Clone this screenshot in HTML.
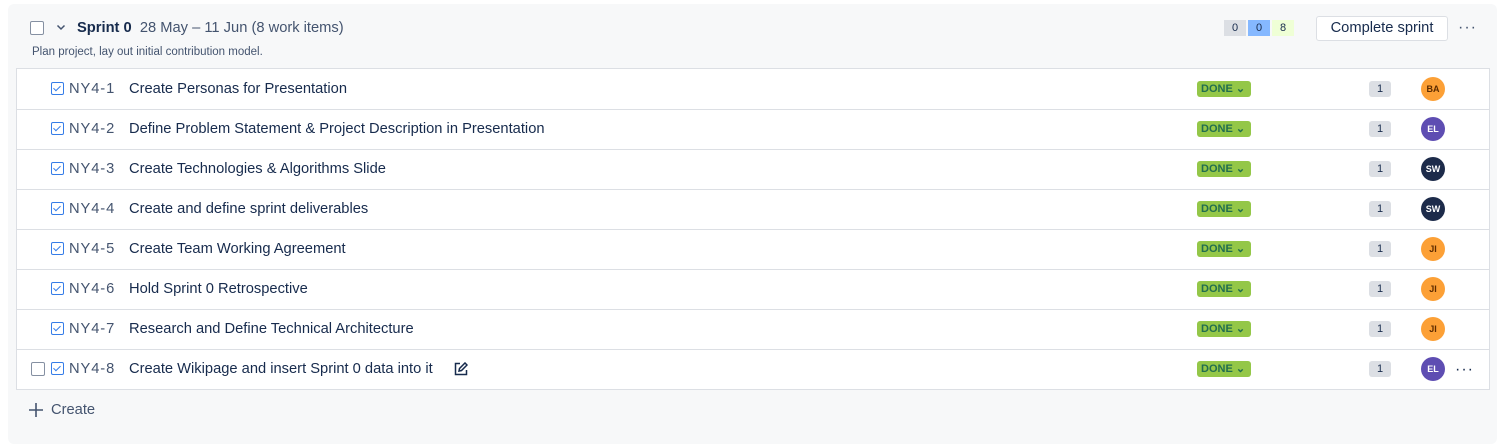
<!DOCTYPE html><html><head><style>
body{margin:0;background:#fff;font-family:"Liberation Sans",sans-serif;color:#172b4d;width:1506px;height:431px;overflow:hidden}
.wrap{position:absolute;left:8px;top:4px;width:1489px;height:440px;background:#f7f8f9;border-radius:6px}
.cb{position:absolute;width:12px;height:12px;border:1px solid #8590a2;border-radius:2px;background:#fff}
.list{position:absolute;left:16px;top:68px;width:1472px;height:320px;background:#fff;border:1px solid #dcdfe4}
.row{position:absolute;left:0;width:1472px;height:40px;border-bottom:1px solid #dcdfe4}
.row:last-child{border-bottom:none}
.ic{position:absolute;left:34px;top:13px;width:11px;height:11px;border:1.5px solid #357de8;border-radius:2px}
.ic:after{content:"";position:absolute;left:3px;top:1px;width:3px;height:6px;border:solid #357de8;border-width:0 1.5px 1.5px 0;transform:rotate(45deg)}
.key{position:absolute;left:52px;top:12px;font-size:14.7px;letter-spacing:.9px;color:#44546f}
.t{position:absolute;left:112px;top:12px;font-size:14.7px;color:#172b4d}
.done{position:absolute;left:1180px;top:12px;height:16px;width:54px;background:#94c748;border-radius:3px;font-size:11px;font-weight:bold;color:#216e4e;line-height:16px;padding-left:4px;box-sizing:border-box}
.pt{position:absolute;left:1352px;top:12px;width:22px;height:16px;background:#dcdfe4;border-radius:3px;font-size:11px;text-align:center;line-height:16px}
.av{position:absolute;left:1404px;top:8px;width:24px;height:24px;border-radius:50%;font-size:9px;font-weight:bold;text-align:center;line-height:24px}
.dots{position:absolute;font-size:16px;letter-spacing:1px;line-height:10px;height:10px}
</style></head><body>
<div class="wrap"></div>
<div class="cb" style="left:30px;top:21px"></div>
<svg style="position:absolute;left:56px;top:24px" width="10" height="7" viewBox="0 0 10 7" fill="none" stroke="#44546f" stroke-width="1.5"><path d="M1.5 1.5L5 5l3.5-3.5"/></svg>
<div style="position:absolute;left:77px;top:20px;font-size:14.7px"><b>Sprint 0</b>&nbsp; <span style="color:#44546f">28 May – 11 Jun (8 work items)</span></div>
<div style="position:absolute;left:32px;top:46px;font-size:11.5px;color:#44546f">Plan project, lay out initial contribution model.</div>
<div style="position:absolute;left:1224px;top:20px;font-size:11px;line-height:16px">
<span style="display:inline-block;width:22px;text-align:center;background:#dcdfe4">0</span><span style="display:inline-block;width:22px;text-align:center;background:#85b8ff;margin-left:2px">0</span><span style="display:inline-block;width:22px;text-align:center;background:#efffd6;margin-left:2px">8</span></div>
<div style="position:absolute;left:1316px;top:16px;width:130px;height:23px;border:1px solid #dcdfe4;border-radius:3px;background:#fff;font-size:14.7px;text-align:center;line-height:23px">Complete sprint</div>
<div class="dots" style="left:1458px;top:23px;color:#44546f">···</div>
<div class="list">
<div class="row" style="top:0"><div class="ic"></div><div class="key">NY4-1</div><div class="t">Create Personas for Presentation</div><div class="done">DONE ⌄</div><div class="pt">1</div><div class="av" style="background:#fca036;color:#5c2b00">BA</div></div>
<div class="row" style="top:40px"><div class="ic"></div><div class="key">NY4-2</div><div class="t">Define Problem Statement &amp; Project Description in Presentation</div><div class="done">DONE ⌄</div><div class="pt">1</div><div class="av" style="background:#5e4db2;color:#fff">EL</div></div>
<div class="row" style="top:80px"><div class="ic"></div><div class="key">NY4-3</div><div class="t">Create Technologies &amp; Algorithms Slide</div><div class="done">DONE ⌄</div><div class="pt">1</div><div class="av" style="background:#1d2b4a;color:#fff">SW</div></div>
<div class="row" style="top:120px"><div class="ic"></div><div class="key">NY4-4</div><div class="t">Create and define sprint deliverables</div><div class="done">DONE ⌄</div><div class="pt">1</div><div class="av" style="background:#1d2b4a;color:#fff">SW</div></div>
<div class="row" style="top:160px"><div class="ic"></div><div class="key">NY4-5</div><div class="t">Create Team Working Agreement</div><div class="done">DONE ⌄</div><div class="pt">1</div><div class="av" style="background:#fca036;color:#5c2b00">JI</div></div>
<div class="row" style="top:200px"><div class="ic"></div><div class="key">NY4-6</div><div class="t">Hold Sprint 0 Retrospective</div><div class="done">DONE ⌄</div><div class="pt">1</div><div class="av" style="background:#fca036;color:#5c2b00">JI</div></div>
<div class="row" style="top:240px"><div class="ic"></div><div class="key">NY4-7</div><div class="t">Research and Define Technical Architecture</div><div class="done">DONE ⌄</div><div class="pt">1</div><div class="av" style="background:#fca036;color:#5c2b00">JI</div></div>
<div class="row" style="top:280px"><div class="cb" style="left:14px;top:13px"></div><div class="ic"></div><div class="key">NY4-8</div><div class="t">Create Wikipage and insert Sprint 0 data into it</div>
<svg style="position:absolute;left:437px;top:13px" width="14" height="14" viewBox="0 0 14 14" fill="none" stroke="#172b4d" stroke-width="1.5"><path d="M6 1.5H1.5v11h11V8"/><path d="M5 9l.5-2.5L11 1l2 2-5.5 5.5z"/></svg>
<div class="done">DONE ⌄</div><div class="pt">1</div><div class="av" style="background:#5e4db2;color:#fff">EL</div><div class="dots" style="left:1438px;top:16px">···</div></div>
</div>
<svg style="position:absolute;left:29px;top:403px" width="14" height="14" viewBox="0 0 14 14" stroke="#44546f" stroke-width="1.6"><path d="M7 0v14M0 7h14"/></svg>
<div style="position:absolute;left:51px;top:402px;font-size:14.7px;color:#44546f">Create</div>
</body></html>
